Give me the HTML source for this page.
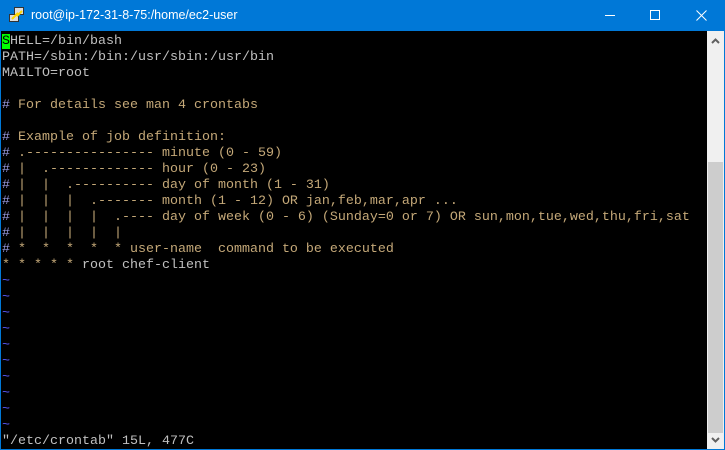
<!DOCTYPE html>
<html><head><meta charset="utf-8"><style>
*{margin:0;padding:0;box-sizing:border-box}
body{width:725px;height:450px;overflow:hidden;background:#0078d7;position:relative;font-family:"Liberation Sans",sans-serif}
.title{position:absolute;left:0;top:0;width:725px;height:31px;background:#0078d7;color:#fff;font-size:12.5px}
.title .t{position:absolute;left:31px;top:8px}
.term{position:absolute;left:1px;top:31px;width:706px;height:418px;background:#000;overflow:hidden}
pre{font-family:"Liberation Mono",monospace;font-size:13.33px;line-height:16px;color:#c0c0c0;position:absolute;left:1px;top:3px;letter-spacing:0}
.h{color:#9a9ae0}.c{color:#c4a878}.tl{color:#5c5cff}
.cur{background:#00ff00;color:#000}
.sb{position:absolute;left:707px;top:31px;width:17px;height:418px;background:#f0f0f0}
.thumb{position:absolute;left:1px;top:131px;width:15px;height:271px;background:#cdcdcd}
</style></head><body>
<div class="title">
<div style="position:absolute;left:9px;top:7px;width:16px;height:16px">
<div style="position:absolute;left:5px;top:0;width:10px;height:8px;background:#ddd;border:1px solid #333"></div>
<div style="position:absolute;left:0;top:7px;width:10px;height:8px;background:#ddd;border:1px solid #333"></div>
<svg style="position:absolute;left:0;top:0" width="16" height="16"><path d="M3 12 L9 6 L8 9 L13 4" stroke="#ffd700" stroke-width="2" fill="none"/></svg>
</div>
<span class="t">root@ip-172-31-8-75:/home/ec2-user</span>
<div style="position:absolute;left:605px;top:15px;width:10px;height:1px;background:#fff"></div>
<div style="position:absolute;left:650px;top:10px;width:10px;height:10px;border:1px solid #fff"></div>
<svg style="position:absolute;left:696px;top:10px" width="11" height="11"><path d="M0.5 0.5L10.5 10.5M10.5 0.5L0.5 10.5" stroke="#fff" stroke-width="1"/></svg>
</div>
<div class="term"><pre><span class="cur">S</span>HELL=/bin/bash
PATH=/sbin:/bin:/usr/sbin:/usr/bin
MAILTO=root

<span class="h">#</span><span class="c"> For details see man 4 crontabs</span>

<span class="h">#</span><span class="c"> Example of job definition:</span>
<span class="h">#</span><span class="c"> .---------------- minute (0 - 59)</span>
<span class="h">#</span><span class="c"> |  .------------- hour (0 - 23)</span>
<span class="h">#</span><span class="c"> |  |  .---------- day of month (1 - 31)</span>
<span class="h">#</span><span class="c"> |  |  |  .------- month (1 - 12) OR jan,feb,mar,apr ...</span>
<span class="h">#</span><span class="c"> |  |  |  |  .---- day of week (0 - 6) (Sunday=0 or 7) OR sun,mon,tue,wed,thu,fri,sat</span>
<span class="h">#</span><span class="c"> |  |  |  |  |</span>
<span class="h">#</span><span class="c"> *  *  *  *  * user-name  command to be executed</span>
<span class="c">* * * * *</span> root chef-client
<span class="tl">~
~
~
~
~
~
~
~
~
~</span>
"/etc/crontab" 15L, 477C</pre></div>
<div class="sb">
<svg style="position:absolute;left:4px;top:7px" width="9" height="6"><path d="M1 5L4.5 1.5L8 5" stroke="#606060" stroke-width="2" fill="none"/></svg>
<div class="thumb"></div>
<svg style="position:absolute;left:4px;top:406px" width="9" height="6"><path d="M1 1L4.5 4.5L8 1" stroke="#606060" stroke-width="2" fill="none"/></svg>
</div>
</body></html>
